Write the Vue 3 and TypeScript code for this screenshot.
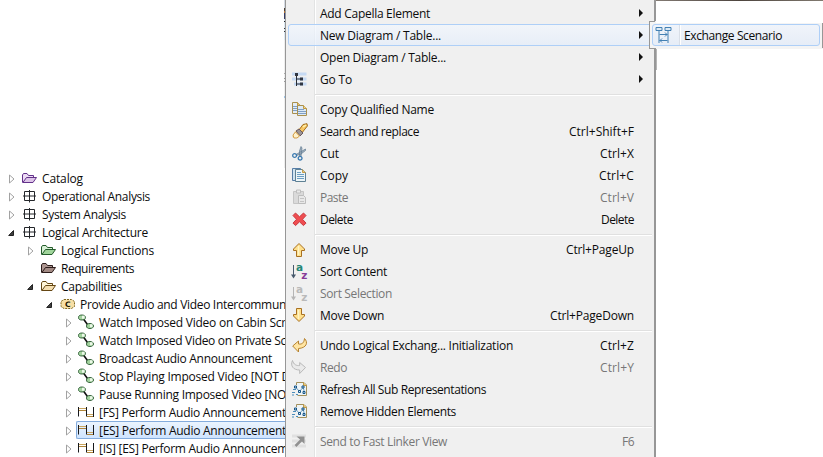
<script setup lang="ts">
interface Shape { d: string; f?: string; s?: string; w?: number; o?: number; dash?: string }
interface Glyph { t: string; x: number; y: number; c: string; size: number }
interface Icon { shapes: Shape[]; glyphs?: Glyph[] }
interface TreeNode { label: string; level: number; icon: string; state: 'open' | 'closed' | 'leaf'; width: number; selected?: boolean }
interface MenuItem { label: string; width: number; icon?: string; keys?: string; keysWidth?: number; arrow?: boolean; disabled?: boolean; active?: boolean }

const folder = (light: string, line: string, fill: string): Icon => ({
  shapes: [
    { d: 'M.5 12.500V5l1-1.500h3.500l1.500 2h5v3', f: light, s: line },
    { d: 'M.9 12.500l3.600-5h10l-3.500 5z', f: fill, s: line },
  ],
})
const sort = (arrow: string, a: string, z: string): Icon => ({
  shapes: [
    { d: 'M1.500 2v11', s: arrow },
    { d: 'M-1 11.500h5l-2.500 4z', f: arrow },
  ],
  glyphs: [
    { t: 'a', x: 3.900, y: 7.500, c: a, size: 10.500 },
    { t: 'z', x: 9.200, y: 15.700, c: z, size: 10.500 },
  ],
})
const refresh: Icon = {
  shapes: [
    { d: 'M4.500 4V1.500h7.500l2.500 2.500v10.500h-9', f: '#eef4f7', s: '#a3905c' },
    { d: 'M11.500 1.500v3h3', f: '#e8c878', s: '#c29a47' },
    { d: 'M3.500 6l4 4.500 3.800-4.500 1 5.500', s: '#5c93bb', w: .9 },
    { d: 'M2.500 5h2v2h-2zM10 5h2v2h-2zM6.500 9.500h2v2h-2zM11 10.500h2v2h-2z', f: '#d5ecfa', s: '#155487', w: 1 },
    { d: 'M1 8.500h3M0 11.500h3M0 14h2M4 13.500h2', s: '#4a8cbb' },
  ],
}
const icons: Record<string, Icon> = {
  purple: folder('#eddcf5', '#63318a', '#ddc5e8'),
  green: folder('#d9f0d7', '#245c2b', '#a0d59b'),
  brown: folder('#ad9691', '#2c1c1b', '#a28a84'),
  tan: folder('#fff6d9', '#654714', '#f4deb0'),
  grid: { shapes: [{ d: 'M2.500 3.500h10v9h-10zM7.500 2v12.500M1 8h13', s: '#24272b' }] },
  capability: {
    shapes: [{ d: 'M4 3.500h7.500l3 2v5l-3 2H4l-3-2v-5z', f: '#f6dfa6', s: '#80671f', dash: '2 1' }],
    glyphs: [{ t: 'C', x: 5, y: 10.800, c: '#171100', size: 7.500 }],
  },
  chain: {
    shapes: [
      { d: 'M4.500 5l5 7', s: '#111', w: 1.600 },
      { d: 'M-.5 3.500C-.5 1.500 1 1 3 1S6.500 2 6.500 3.500 5 6 3 6-.5 5.500-.5 3.500zM7.500 12C7.500 10 9 9.500 11 9.500s3.500 1 3.500 2.500S13 14.500 11 14.500 7.500 14 7.500 12z', f: '#a3d39e', s: '#24532b', w: .9 },
      { d: 'M3 1.800h2.500v3H3zM11 10.300h2.500v3H11z', f: '#ecf8e8' },
    ],
  },
  scenario: {
    shapes: [
      { d: 'M0 4.500h7M8 10.500h6', s: '#c9a55f' },
      { d: 'M0 6.500h7M8 12.500h6', s: '#b0853a' },
      { d: 'M-.5 3v9.500M7.500 3v9.500M14.500 3v10', s: '#18191d' },
    ],
  },
  goto: {
    shapes: [
      { d: 'M0 1.500h14.500v3H0zM0 6.500h14.500v3H0zM2 11.500h12.500v3H2z', f: '#bcd5f5', o: .8 },
      { d: 'M4.500 3v12M4.500 8H9M4.500 13H9', s: '#292d35', w: 1 },
      { d: 'M3 2h3v3H3zM8 6.500h3v3H8zM8 11.500h3v3H8z', f: '#303642' },
    ],
  },
  copyName: {
    shapes: [
      { d: 'M.5 1.500h5l3 3v8h-8z', f: '#e3edf6', s: '#a9904f' },
      { d: 'M5.500 1.500v3h3', f: '#e9c477', s: '#c19843' },
      { d: 'M5.500 4.500h6l3 3v7h-9z', f: '#dceaf6', s: '#a9904f' },
      { d: 'M11.500 4.500v3h3', f: '#f2d98f', s: '#c19843' },
      { d: 'M1 5.500h4M1 7.500h4M1 9.500h4M6 8.500h6M6 10.500h8M6 12.500h8', s: '#809fc5' },
    ],
  },
  search: {
    shapes: [
      { d: 'M0 14L3 8l6-4 3 4-5 6-4 1z', f: '#f5d68a', o: .7 },
      { d: 'M7 7l4-5.500 4-.8.4 2.300-5.200 6.500z', f: '#f8c765', s: '#a36f1d' },
      { d: 'M4 8l3-2 4 4-3 3z', f: '#9b9595', s: '#6a5961' },
      { d: 'M3.500 9L7.500 13 5 15H2L1 12z', f: '#fff2cb', s: '#d39d48' },
      { d: 'M11 4l3-2', s: '#fff3ad', w: 1.500 },
    ],
  },
  cut: {
    shapes: [
      { d: 'M4 9.500L13.500 4v1.500L9 9l-4.500 1.500zM7.500 11.500L7.500 6 9 1.500 10 3 9 11.500z', f: '#a1b1bf', s: '#627b92', w: .7 },
      { d: 'M.7 10.500a1.900 1.900 0 1 0 3.800 0 1.900 1.900 0 1 0-3.800 0zM6.200 13.200a1.900 1.900 0 1 0 3.800 0 1.900 1.900 0 1 0-3.800 0z', s: '#3979af', w: 1.300 },
    ],
  },
  copy: {
    shapes: [
      { d: 'M.5 1.500h8v12h-8z', f: '#d1e3f0', s: '#567da5' },
      { d: 'M3.500 2.500h7l3 3v9h-10z', f: '#edf5f8', s: '#5f8194' },
      { d: 'M10.500 2.500v3h3', f: '#f1ce79', s: '#c49a49' },
      { d: 'M5 5.500h4M5 7.500h7M5 9.500h7M5 11.500h7', s: '#6d9fc3' },
    ],
  },
  paste: {
    shapes: [
      { d: 'M1.500 2.500h10v12h-10z', f: '#dadada', s: '#c5c5c5' },
      { d: 'M4.500 1h4v3h-4z', f: '#e9e9e9', s: '#bebebe' },
      { d: 'M6.500 6.500h5l2 2v6h-7z', f: '#e8e8e8', s: '#bdbdbd' },
      { d: 'M8 9.500h4M8 12.500h4', s: '#c4c4c4' },
    ],
  },
  remove: { shapes: [{ d: 'M3.500 2l4 3.800 4-3.800 2.500 2.500-3.500 3.800 3.500 3.800-2.500 2.500-4-3.800-4 3.800L1 12.100l3.500-3.800L1 4.500z', f: '#ef4d50', s: '#c9383f' }] },
  up: { shapes: [{ d: 'M7 2.500L12.500 8v1.500h-3v6h-5v-6h-3V8z', f: '#ffe08c', s: '#a87021' }, { d: 'M6.500 5v9', s: '#fff4c5', w: 1.500 }] },
  down: { shapes: [{ d: 'M7 14.500L12.500 9V7.500h-3v-6h-5v6h-3V9z', f: '#ffe08c', s: '#a87021' }, { d: 'M6.500 3v9', s: '#fff4c5', w: 1.500 }] },
  sort: sort('#47596c', '#258677', '#873b98'),
  sortGray: sort('#b5b5b5', '#b9b9b9', '#b9b9b9'),
  undo: { shapes: [{ d: 'M.7 9L6.500 4v3C10 7.500 12 6 12.500 1.500c4 4 2 9.500-6 10v3.500z', f: '#ffe5a3', s: '#b78431' }] },
  redo: { shapes: [{ d: 'M13.500 8.500L7.700 3.500v3C4.500 7 1.500 5.500.5 1.500c-2.500 5 .5 9.500 7.200 9.500v3.500z', f: '#eaeaea', s: '#b9b9b9' }] },
  refresh,
  send: {
    shapes: [
      { d: 'M0 3h14M0 8h14M0 13h14', s: '#e0e0e0', w: 3 },
      { d: 'M3.500 13l7-7', s: '#909090', w: 2.500 },
      { d: 'M4.500 3.500h8V11L10 8.500 7.500 6z', f: '#909090' },
    ],
  },
  exchange: {
    shapes: [
      { d: 'M.5 1.500h6v3h-6zM9.500 1.500h6v3h-6z', f: '#dceaf5', s: '#4380b3' },
      { d: 'M3.500 5v12M12.500 5v12M4 8.500h8M4 14.500h8M9.500 6.500l2 2-2 2M6.500 12.500l-2 2 2 2', s: '#4380b3' },
    ],
  },
}

const tree: TreeNode[] = [
  { label: 'Catalog', level: 0, icon: 'purple', state: 'closed', width: 41 },
  { label: 'Operational Analysis', level: 0, icon: 'grid', state: 'closed', width: 108 },
  { label: 'System Analysis', level: 0, icon: 'grid', state: 'closed', width: 84 },
  { label: 'Logical Architecture', level: 0, icon: 'grid', state: 'open', width: 106 },
  { label: 'Logical Functions', level: 1, icon: 'green', state: 'closed', width: 93 },
  { label: 'Requirements', level: 1, icon: 'brown', state: 'leaf', width: 73 },
  { label: 'Capabilities', level: 1, icon: 'tan', state: 'open', width: 61 },
  { label: 'Provide Audio and Video Intercommun', level: 2, icon: 'capability', state: 'open', width: 206 },
  { label: 'Watch Imposed Video on Cabin Scr', level: 3, icon: 'chain', state: 'closed', width: 187 },
  { label: 'Watch Imposed Video on Private Sc', level: 3, icon: 'chain', state: 'closed', width: 187 },
  { label: 'Broadcast Audio Announcement', level: 3, icon: 'chain', state: 'closed', width: 173 },
  { label: 'Stop Playing Imposed Video [NOT D', level: 3, icon: 'chain', state: 'closed', width: 191 },
  { label: 'Pause Running Imposed Video [NO', level: 3, icon: 'chain', state: 'closed', width: 187 },
  { label: '[FS] Perform Audio Announcement', level: 3, icon: 'scenario', state: 'closed', width: 187 },
  { label: '[ES] Perform Audio Announcement', level: 3, icon: 'scenario', state: 'closed', width: 187, selected: true },
  { label: '[IS] [ES] Perform Audio Announcem', level: 3, icon: 'scenario', state: 'closed', width: 189 },
]

const groups: MenuItem[][] = [
  [
    { label: 'Add Capella Element', width: 110, arrow: true },
    { label: 'New Diagram / Table...', width: 121, arrow: true, active: true },
    { label: 'Open Diagram / Table...', width: 126, arrow: true },
    { label: 'Go To', width: 32, icon: 'goto', arrow: true },
  ],
  [
    { label: 'Copy Qualified Name', width: 114, icon: 'copyName' },
    { label: 'Search and replace', width: 99, icon: 'search', keys: 'Ctrl+Shift+F', keysWidth: 65 },
    { label: 'Cut', width: 19, icon: 'cut', keys: 'Ctrl+X', keysWidth: 34 },
    { label: 'Copy', width: 28, icon: 'copy', keys: 'Ctrl+C', keysWidth: 35 },
    { label: 'Paste', width: 28, icon: 'paste', keys: 'Ctrl+V', keysWidth: 34, disabled: true },
    { label: 'Delete', width: 33, icon: 'remove', keys: 'Delete', keysWidth: 33 },
  ],
  [
    { label: 'Move Up', width: 48, icon: 'up', keys: 'Ctrl+PageUp', keysWidth: 68 },
    { label: 'Sort Content', width: 67, icon: 'sort' },
    { label: 'Sort Selection', width: 72, icon: 'sortGray', disabled: true },
    { label: 'Move Down', width: 64, icon: 'down', keys: 'Ctrl+PageDown', keysWidth: 84 },
  ],
  [
    { label: 'Undo Logical Exchang... Initialization', width: 193, icon: 'undo', keys: 'Ctrl+Z', keysWidth: 34 },
    { label: 'Redo', width: 27, icon: 'redo', keys: 'Ctrl+Y', keysWidth: 34, disabled: true },
    { label: 'Refresh All Sub Representations', width: 166, icon: 'refresh' },
    { label: 'Remove Hidden Elements', width: 136, icon: 'refresh' },
  ],
  [{ label: 'Send to Fast Linker View', width: 127, icon: 'send', keys: 'F6', keysWidth: 12, disabled: true }],
]

const vFit = {
  mounted(el: HTMLElement, binding: { value?: number }) {
    if (!binding.value) return
    const chars = (el.textContent ?? '').length
    el.style.letterSpacing = `${(binding.value - el.getBoundingClientRect().width) / chars}px`
  },
}
</script>

<template>
  <main class="screen">
    <section class="tree">
      <div v-for="node in tree" :key="node.label" class="node" :class="'level-' + node.level">
        <svg class="twisty" viewBox="0 0 8 10">
          <path v-if="node.state === 'closed'" d="M1.500 1v8l4.500-4z" fill="#fff" stroke="#a2a2a2" />
          <path v-if="node.state === 'open'" d="M5.500 2.500v5H.7z" fill="#404040" stroke="#222" />
        </svg>
        <div class="entry" :class="{ selected: node.selected }">
          <svg class="icon" viewBox="0 0 16 16">
            <path v-for="(p, i) in icons[node.icon].shapes" :key="i" :d="p.d" :fill="p.f ?? 'none'" :stroke="p.s ?? 'none'" :stroke-width="p.w ?? 1" :opacity="p.o ?? 1" :stroke-dasharray="p.dash" />
            <text v-for="g in icons[node.icon].glyphs" :key="g.t" class="letter" :x="g.x" :y="g.y" :fill="g.c" :font-size="g.size">{{ g.t }}</text>
          </svg>
          <span v-fit="node.width" class="name">{{ node.label }}</span>
        </div>
      </div>
    </section>

    <nav class="menu">
      <div v-for="(group, n) in groups" :key="n" class="group">
        <div v-for="item in group" :key="item.label" class="item" :class="{ disabled: item.disabled, active: item.active }">
          <span class="slot">
            <svg v-if="item.icon" class="icon" viewBox="0 0 16 16">
              <path v-for="(p, i) in icons[item.icon].shapes" :key="i" :d="p.d" :fill="p.f ?? 'none'" :stroke="p.s ?? 'none'" :stroke-width="p.w ?? 1" :opacity="p.o ?? 1" />
              <text v-for="g in icons[item.icon].glyphs" :key="g.t" class="letter" :x="g.x" :y="g.y" :fill="g.c" :font-size="g.size">{{ g.t }}</text>
            </svg>
          </span>
          <span v-fit="item.width" class="label">{{ item.label }}</span>
          <span v-if="item.keys" v-fit="item.keysWidth" class="keys">{{ item.keys }}</span>
          <svg v-if="item.arrow" class="arrow" viewBox="0 0 4 8"><path d="M0 0v8l4-4z" fill="#111" /></svg>
        </div>
      </div>
    </nav>

    <section class="side">
      <div class="topline"></div>
      <div class="submenu">
        <div class="subitem">
          <span class="subslot">
            <svg class="subicon" viewBox="0 0 16 18">
              <path v-for="(p, i) in icons.exchange.shapes" :key="i" :d="p.d" :fill="p.f ?? 'none'" :stroke="p.s" :stroke-width="p.w ?? 1" />
            </svg>
          </span>
          <span v-fit="98" class="label">Exchange Scenario</span>
        </div>
      </div>
      <div class="shade"></div>
    </section>
  </main>
</template>

<style>
body { margin: 0; overflow: hidden; background: #fff; }
</style>

<style scoped>
.screen { display: grid; grid-template-columns: 285px 371px 167px; width: 823px; height: 457px; overflow: hidden; font: 12px/17px "Open Sans", "Noto Sans", sans-serif; color: #0c0c0c; background: #fff; }
.tree { padding-top: 169px; overflow: hidden; min-width: 0; background: linear-gradient(#d5dbe4 0 8px, #4a4038 8px 11px, #b9793a 11px 13px, #353c66 13px 19px, #dbe8f4 19px 21px, #222 21px 22px, #dbe8f4 22px 28px, #333 28px 29px, #dbe8f4 29px 31px, #333 31px 32px, #dbe8f4 32px 40px, #eee 40px 73px, #aaa 73px 74px, #eee 74px 78px, #999 78px 79px, #eee 79px 81px, #999 81px 82px, #eee 82px 96px, #9fc5e8 96px 98px, #eee 98px 168px, transparent 168px) right top / 1px 100% no-repeat; }
.node { display: flex; height: 18px; align-items: center; white-space: nowrap; }
.level-0 { padding-left: 8px; }
.level-1 { padding-left: 27px; }
.level-2 { padding-left: 46px; }
.level-3 { padding-left: 65px; }
.twisty { width: 8px; height: 10px; flex: none; margin: 2px 3px 0 0; }
.entry { display: flex; align-items: center; height: 18px; box-sizing: border-box; padding-left: 2px; border: 1px solid transparent; flex: 1 0 auto; }
.selected { border: 1px solid #84acdd; border-right: 0; border-radius: 2px 0 0 2px; background: linear-gradient(#ebf4fe, #cfe4fe); }
.icon { width: 16px; height: 16px; flex: none; display: block; overflow: visible; }
.name { margin-left: 4px; white-space: pre; padding-top: 1px; }
.letter { font-family: "DejaVu Sans", sans-serif; font-weight: bold; }
.menu { box-sizing: border-box; height: 457px; padding: 2px; border-left: 1px solid #979797; border-right: 2px solid #979797; background: linear-gradient(90deg, transparent 28px, #e2e3e3 28px 29px, #fff 29px 30px, transparent 30px), #f0f0f0; overflow: hidden; }
.group + .group { margin-top: 4px; padding-top: 3px; border-top: 1px solid #e0e0e0; border-image: linear-gradient(90deg, transparent 28px, #e0e0e0 28px) 1; background: linear-gradient(#fff, #fff) 28px 0 / 100% 1px no-repeat; background-origin: padding-box; }
.item { height: 22px; box-sizing: border-box; display: flex; align-items: center; border: 1px solid transparent; white-space: nowrap; padding-right: 9px; }
.active { border-color: #aecff7; border-radius: 3px; background: linear-gradient(rgba(242, 247, 254, .7), rgba(228, 237, 250, .7)); }
.slot { width: 31px; padding-left: 3px; box-sizing: border-box; flex: none; }
.label { white-space: pre; flex: none; padding-top: 1px; }
.keys { margin-left: auto; margin-right: 8px; white-space: pre; padding-top: 1px; }
.arrow { width: 4px; height: 8px; margin-left: auto; margin-right: -1px; }
.disabled { color: #777; }
.side { min-width: 0; }
.topline { height: 1px; background: linear-gradient(90deg, #827a73, #4d443e, #817a70); }
.submenu { position: relative; left: -7px; margin-top: 20px; width: 174px; height: 28px; box-sizing: border-box; padding: 3px; background: linear-gradient(#979797, #979797) 0 0 / 1px 100% no-repeat, linear-gradient(#979797, #979797) 0 0 / 6px 1px no-repeat, linear-gradient(#979797, #979797) 0 100% / 7px 1px no-repeat, linear-gradient(#979797, #979797) 100% 2px / 1px 25px no-repeat, linear-gradient(#fff, #fff) 7px 0 / 167px 2px no-repeat, #f4f4f4; }
.subitem { display: flex; align-items: center; height: 22px; width: 168px; box-sizing: border-box; border: 1px solid #aecff7; border-radius: 3px; background: linear-gradient(90deg, transparent 26px, #d9dfe8 26px 27px, #fff 27px 28px, transparent 28px), linear-gradient(#f0f4fa, #e6edf7); }
.subslot { width: 31px; height: 20px; box-sizing: border-box; flex: none; padding: 1px 0 0 2px; }
.subicon { width: 17px; height: 18px; display: block; }
.shade { width: 1px; height: 21px; background: #b5b5b5; }
</style>
